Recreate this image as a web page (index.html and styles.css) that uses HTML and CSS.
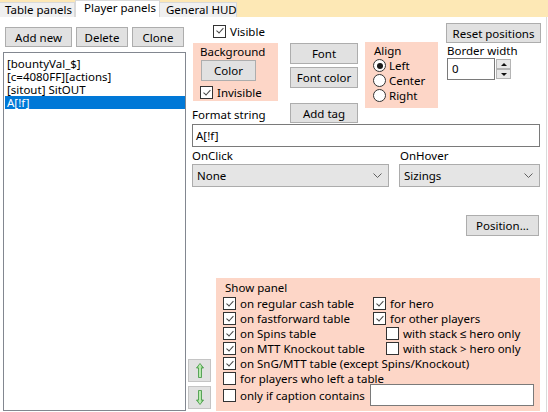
FILE: index.html
```html
<!doctype html>
<html>
<head>
    <meta charset="utf-8">
    <title>Player panels</title>
    <link rel="stylesheet" href="styles.css">
</head>
<body>
    <div class="tabs">
        <div class="tab t1">Table panels</div>
        <div class="tab t2 active">Player panels</div>
        <div class="tab t3">General HUD</div>
    </div>
    <div class="page">
        <div class="left">
            <div class="btnrow">
                <button class="btn b-add">Add new</button>
                <button class="btn b-del">Delete</button>
                <button class="btn b-clone">Clone</button>
            </div>
            <ul class="list">
                <li>[bountyVal_$]</li>
                <li>[c=4080FF][actions]</li>
                <li>[sitout] SitOUT</li>
                <li class="sel">A[!f]</li>
            </ul>
        </div>

        <div class="right">
            <div class="top">
                <div class="col1">
                    <div class="chk vis"><span class="cb on"></span>Visible</div>
                    <div class="grp bg-grp">
                        <div class="grp-title">Background</div>
                        <button class="btn b-color">Color</button>
                        <div class="chk inv"><span class="cb on"></span>Invisible</div>
                    </div>
                    <div class="lbl fmt-lbl">Format string</div>
                </div>
                <div class="col2">
                    <button class="btn b-font">Font</button>
                    <button class="btn b-font b-fcolor">Font color</button>
                    <button class="btn b-font b-tag">Add tag</button>
                </div>
                <div class="grp align">
                    <div class="grp-title">Align</div>
                    <div class="rad"><span class="rb on"></span>Left</div>
                    <div class="rad"><span class="rb"></span>Center</div>
                    <div class="rad"><span class="rb"></span>Right</div>
                </div>
                <div class="col4">
                    <button class="btn b-reset">Reset positions</button>
                    <div class="lbl bw-lbl">Border width</div>
                    <div class="spin">
                        <div class="txt spin-val">0</div>
                        <div class="spin-btns">
                            <div class="spin-btn"><span class="tri up"></span></div>
                            <div class="spin-btn"><span class="tri down"></span></div>
                        </div>
                    </div>
                </div>
            </div>

            <div class="txt fmt">A[!f]</div>

            <div class="evrow">
                <div class="lbl">OnClick</div>
                <div class="lbl hover-lbl">OnHover</div>
            </div>
            <div class="evrow combos">
                <div class="combo">None
                    <svg width="9" height="5" viewBox="0 0 9 5"><polyline points="0.5,0.5 4.5,4.5 8.5,0.5" fill="none" stroke="#606060" stroke-width="1"/></svg>
                </div>
                <div class="combo">Sizings
                    <svg width="9" height="5" viewBox="0 0 9 5"><polyline points="0.5,0.5 4.5,4.5 8.5,0.5" fill="none" stroke="#606060" stroke-width="1"/></svg>
                </div>
            </div>

            <button class="btn b-pos">Position...</button>

            <div class="bottom">
                <div class="arrows">
                    <div class="abtn">
                        <svg width="8" height="15" viewBox="0 0 8 15">
                            <defs>
                                <linearGradient id="gr" x1="0" y1="0" x2="1" y2="0">
                                    <stop offset="0" stop-color="#5fbf55"/>
                                    <stop offset="0.5" stop-color="#c9f3bf"/>
                                    <stop offset="1" stop-color="#4aa846"/>
                                </linearGradient>
                            </defs>
                            <polygon points="4,0.5 7.5,5 5.5,5 5.5,14.5 2.5,14.5 2.5,5 0.5,5" fill="url(#gr)" stroke="#3f9440" stroke-width="0.8"/>
                        </svg>
                    </div>
                    <div class="abtn">
                        <svg width="8" height="15" viewBox="0 0 8 15">
                            <polygon points="4,14.5 7.5,10 5.5,10 5.5,0.5 2.5,0.5 2.5,10 0.5,10" fill="url(#gr)" stroke="#3f9440" stroke-width="0.8"/>
                        </svg>
                    </div>
                </div>
                <div class="grp show">
                    <div class="grp-title">Show panel</div>
                    <div class="two">
                        <div class="chk"><span class="cb on"></span>on regular cash table</div>
                        <div class="chk"><span class="cb on"></span>for hero</div>
                        <div class="chk"><span class="cb on"></span>on fastforward table</div>
                        <div class="chk"><span class="cb on"></span>for other players</div>
                        <div class="chk"><span class="cb on"></span>on Spins table</div>
                        <div class="chk sub"><span class="cb"></span>with stack ≤ hero only</div>
                        <div class="chk"><span class="cb on"></span>on MTT Knockout table</div>
                        <div class="chk sub"><span class="cb"></span>with stack &gt; hero only</div>
                    </div>
                    <div class="chk"><span class="cb on"></span>on SnG/MTT table (except Spins/Knockout)</div>
                    <div class="chk"><span class="cb"></span>for players who left a table</div>
                    <div class="chk cap"><span class="cb"></span>only if caption contains<div class="txt cap-box"></div></div>
                </div>
            </div>
        </div>
    </div>
</body>
</html>
```

FILE: styles.css
```css
html,body,ul,li {
    margin:0;
    padding:0;
}
ul,li {
    list-style:none;
}
body {
    width:548px;
    height:412px;
    overflow:hidden;
    background:#fff;
    font-family:"Noto Sans","Liberation Sans",sans-serif;
    font-size:11.5px;
    color:#000;
}

/* tabs */
.tabs {
    display:flex;
    align-items:flex-end;
    height:17px;
    background:#fde8b5;
}
.tab {
    box-sizing:border-box;
    height:15px;
    line-height:14px;
    background:#f0f0f0;
    border:1px solid #d9d9d9;
    border-bottom:none;
    white-space:nowrap;
}
.t1 { width:75px; padding-left:5px; border-left:none; }
.t2 { width:85px; padding-left:8px; }
.t3 { width:77px; padding-left:6px; border-left:none; }
.tab.active {
    height:17px;
    line-height:13px;
    background:#fff;
}

/* page */
.page {
    display:flex;
    width:547px;
    height:395px;
    box-sizing:border-box;
    border-right:1px solid #dadada;
}
.btn {
    font:inherit;
    color:#000;
    background:#e1e1e1;
    border:1px solid #adadad;
    padding:0;
    height:20px;
    box-sizing:border-box;
}
.left {
    width:186px;
    flex-shrink:0;
    padding-left:3px;
    box-sizing:border-box;
    display:flex;
    flex-direction:column;
}
.btnrow {
    display:flex;
    gap:4px;
    margin:10px 0 5px 2px;
}
.b-add { width:67px; }
.b-del { width:52px; }
.b-clone { width:52px; }
.list {
    flex:1;
    width:183px;
    box-sizing:border-box;
    border:1px solid #828790;
    padding:4px 0 0 1px;
    margin-bottom:1px;
}
.list li {
    height:13px;
    line-height:13px;
    padding-left:2px;
    white-space:nowrap;
}
.list li.sel {
    background:#0078d7;
    color:#fff;
}

/* right side */
.right {
    flex:1;
    display:flex;
    flex-direction:column;
    padding:6px 6px 1px 6px;
    box-sizing:border-box;
    min-width:0;
}
.top {
    display:flex;
    align-items:flex-start;
    height:101px;
}
.lbl {
    line-height:15px;
    white-space:nowrap;
}
.grp {
    background:#fdd6c7;
    box-sizing:border-box;
}
.grp-title {
    line-height:15px;
    white-space:nowrap;
}
.chk, .rad {
    display:flex;
    align-items:center;
    gap:4px;
    height:15px;
    white-space:nowrap;
}
.cb {
    position:relative;
    flex-shrink:0;
    width:11px;
    height:11px;
    border:1px solid #333;
    background:#fff;
}
.cb.on::after {
    content:'';
    position:absolute;
    left:3.5px;
    top:0.5px;
    width:2.5px;
    height:6px;
    border:solid #444;
    border-width:0 1.2px 1.2px 0;
    transform:rotate(42deg);
}
.rb {
    position:relative;
    flex-shrink:0;
    width:11px;
    height:11px;
    border:1px solid #333;
    border-radius:50%;
    background:#fff;
}
.rb.on::after {
    content:'';
    position:absolute;
    left:2.5px;
    top:2.5px;
    width:6px;
    height:6px;
    border-radius:50%;
    background:#1a1a1a;
}

.col1 {
    width:87px;
    flex-shrink:0;
    margin-right:11px;
}
.vis {
    height:16px;
    margin-left:21px;
}
.bg-grp {
    width:85px;
    height:58px;
    margin:4px 0 0 1px;
    padding:1px 0 0 7px;
}
.b-color {
    width:55px;
    height:21px;
    margin:1px 0 0 1px;
    display:block;
}
.inv {
    margin-top:4px;
}
.fmt-lbl {
    margin-top:6px;
}

.col2 {
    width:68px;
    flex-shrink:0;
    margin:20px 7px 0 0;
    display:flex;
    flex-direction:column;
}
.b-font {
    width:68px;
    height:21px;
}
.b-fcolor {
    margin-top:3px;
}
.b-tag {
    height:20px;
    margin-top:15px;
}

.align {
    width:73px;
    height:66px;
    flex-shrink:0;
    margin:19px 8px 0 0;
    padding:1px 0 0 8px;
}
.align .grp-title {
    padding-left:1px;
}
.rad {
    gap:3px;
}

.col4 {
    width:95px;
    flex-shrink:0;
}
.b-reset {
    width:95px;
}
.bw-lbl {
    margin:0 0 0 1px;
}
.spin {
    display:flex;
    align-items:flex-start;
    gap:1px;
    margin-left:1px;
}
.txt {
    background:#fff;
    border:1px solid #7a7a7a;
    box-sizing:border-box;
    white-space:nowrap;
}
.spin-val {
    width:48px;
    height:22px;
    line-height:20px;
    padding-left:4px;
}
.spin-btns {
    display:flex;
    flex-direction:column;
    margin-top:1px;
}
.spin-btn {
    width:15px;
    height:10px;
    box-sizing:border-box;
    background:#e8e8e8;
    border:1px solid #b4b4b4;
    display:flex;
    align-items:center;
    justify-content:center;
}
.tri {
    width:0;
    height:0;
    border-left:3px solid transparent;
    border-right:3px solid transparent;
}
.tri.up { border-bottom:3px solid #111; }
.tri.down { border-top:3px solid #111; }

.fmt {
    height:23px;
    line-height:21px;
    padding-left:3px;
}
.evrow {
    display:grid;
    grid-template-columns:197px 141px;
    column-gap:10px;
    height:17px;
}
.evrow .lbl {
    line-height:17px;
}
.hover-lbl {
    padding-left:1px;
}
.combos {
    height:23px;
}
.combo {
    height:23px;
    box-sizing:border-box;
    background:#e5e5e5;
    border:1px solid #acacac;
    display:flex;
    align-items:center;
    justify-content:space-between;
    padding:0 6px 0 4px;
}
.b-pos {
    align-self:flex-end;
    width:73px;
    height:21px;
    margin:28px 1px 0 0;
}

/* bottom part */
.bottom {
    margin-top:auto;
    display:flex;
    align-items:flex-end;
}
.arrows {
    display:flex;
    flex-direction:column;
    gap:4px;
    margin:0 5px 2px -4px;
}
.abtn {
    width:23px;
    height:23px;
    box-sizing:border-box;
    background:#e1e1e1;
    border:1px solid #c4c4c4;
    display:flex;
    align-items:center;
    justify-content:center;
}
.show {
    width:325px;
    height:133px;
    padding:2px 0 0 7px;
}
.show .grp-title {
    line-height:16px;
    padding-left:2px;
}
.two {
    display:grid;
    grid-template-columns:150px auto;
}
.sub {
    padding-left:13px;
}
.cap {
    height:22px;
    margin-top:-2px;
}
.cap-box {
    width:164px;
    height:22px;
    margin-left:1px;
}
```
